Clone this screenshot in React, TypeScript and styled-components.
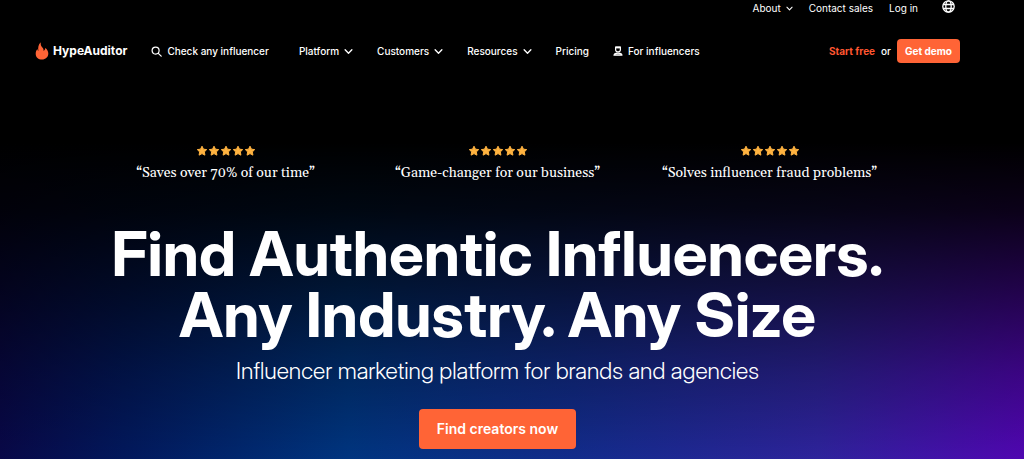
import React from 'react';
import styled, { createGlobalStyle } from 'styled-components';

const GlobalStyle = createGlobalStyle`
  * { box-sizing: border-box; }
  body {
    margin: 0;
    background: #000;
    color: #fff;
    font-family: Inter, "Liberation Sans", sans-serif;
  }
  a { color: inherit; text-decoration: none; }
`;

const Page = styled.div`
  min-height: 100vh;
  padding: 0 64px 11px 35px;
  background:
    linear-gradient(
      to bottom,
      #000 0%,
      #000 31%,
      rgba(0, 0, 0, 0.86) 46%,
      rgba(0, 0, 0, 0.6) 62%,
      rgba(0, 0, 0, 0.27) 81%,
      rgba(0, 0, 0, 0) 100%
    ),
    linear-gradient(
      to right,
      #080848 0%,
      #02185c 12%,
      #003580 34%,
      #122c8c 56%,
      #2e239c 80%,
      #5006b2 100%
    );
`;

const TopBar = styled.nav`
  display: flex;
  justify-content: flex-end;
  align-items: center;
  gap: 16px;
  height: 16px;
  padding-right: 5px;
`;

const menuText = `
  display: flex;
  align-items: center;
  gap: 5px;
  padding: 0;
  border: 0;
  background: none;
  color: #fff;
  font-family: inherit;
  font-size: 10px;
  line-height: 16px;
  white-space: nowrap;
`;

const MenuButton = styled.button<{ $light?: boolean }>`
  ${menuText}
  font-weight: ${({ $light }) => ($light ? 400 : 500)};
`;

const MenuLink = styled.a<{ $light?: boolean }>`
  ${menuText}
  font-weight: ${({ $light }) => ($light ? 400 : 500)};
`;

const GlobeButton = styled.button`
  display: flex;
  margin: 0 0 4px 8px;
  padding: 0;
  border: 0;
  background: none;
  color: #fff;
`;

const MainBar = styled.header`
  display: flex;
  align-items: center;
  height: 24px;
  margin-top: 23px;
`;

const Logo = styled.a`
  display: flex;
  align-items: center;
  gap: 4px;
  font-size: 12px;
  line-height: 16px;
  font-weight: 700;
`;

const SearchArea = styled.div`
  margin: 0 30px 0 24px;
`;

const MainMenu = styled.nav`
  display: flex;
  align-items: center;
  gap: 24px;
`;

const Actions = styled.div`
  display: flex;
  align-items: center;
  gap: 6px;
  margin-left: auto;
  font-size: 10px;
  line-height: 16px;
  font-weight: 500;
  white-space: nowrap;
`;

const StartLink = styled.a`
  && { color: #ff5630; }
  font-weight: 700;
`;

const DemoButton = styled.button`
  height: 24px;
  padding: 0 8px;
  border: 0;
  border-radius: 4px;
  background: #ff6436;
  color: #fff;
  font: 700 10px/16px Inter, "Liberation Sans", sans-serif;
`;

const Hero = styled.main`
  display: flex;
  flex-direction: column;
  align-items: center;
  padding-top: 82px;
  text-align: center;
`;

const Reviews = styled.div`
  display: grid;
  grid-template-columns: repeat(3, 1fr);
  width: 100%;
  max-width: 816px;
`;

const Review = styled.figure`
  display: flex;
  flex-direction: column;
  align-items: center;
  gap: 6px;
  margin: 0;
`;

const Stars = styled.div`
  display: flex;
`;

const Quote = styled.blockquote`
  margin: 0;
  font-family: Gelasio, Georgia, "Liberation Serif", serif;
  font-size: 14px;
  line-height: 20px;
`;

const Title = styled.h1`
  margin: 40px 0 0;
  font-family: "Inter Display", Inter, "Liberation Sans", sans-serif;
  font-size: 62px;
  line-height: 61px;
  font-weight: 700;
`;

const Subtitle = styled.p`
  margin: 12px 0 0;
  font-family: "Inter Display", Inter, "Liberation Sans", sans-serif;
  font-size: 23px;
  line-height: 28px;
  font-weight: 300;
`;

const CtaButton = styled.button`
  height: 40px;
  margin-top: 24px;
  padding: 0 18px;
  border: 0;
  border-radius: 4px;
  background: #ff6436;
  color: #fff;
  font: 600 14px/20px Inter, "Liberation Sans", sans-serif;
`;

const Chevron = ({ size = 9 }: { size?: number }) => (
  <svg width={size} height={size} viewBox="0 0 8 8" fill="none" aria-hidden="true">
    <path d="M1 2.500 4 5.600 7 2.500" stroke="currentColor" strokeWidth="1.200" strokeLinecap="round" strokeLinejoin="round" />
  </svg>
);

const Flame = () => (
  <svg width="14" height="18" viewBox="0 0 14 18" aria-hidden="true">
    <path
      fill="#ff6436"
      d="M5.900.3C5.300 2.600 6 4.200 7.600 5.800c.9.900 1.200 1.900.8 3 1-.3 1.700-1.200 1.800-2.900 2 1.300 3.100 3.200 3.100 5.700 0 3.600-2.700 6-6.300 6S.7 15.200.7 11.700c0-1.900.7-3.400 1.700-4.700.1 1 .4 1.700 1 2.100C2.900 5.700 3.200 2.400 5.900.3Z"
    />
  </svg>
);

const Search = () => (
  <svg width="11" height="11" viewBox="0 0 11 11" fill="none" stroke="currentColor" strokeWidth="1.200" strokeLinecap="round" aria-hidden="true">
    <circle cx="4.600" cy="4.600" r="3.500" />
    <path d="m7.300 7.300 2.900 2.900" />
  </svg>
);

const Person = () => (
  <svg width="10" height="10" viewBox="0 0 10 10" fill="none" stroke="currentColor" strokeWidth="1.200" strokeLinejoin="round" aria-hidden="true">
    <path d="M2.600 1h4.800v2.400C7.400 4.900 6.400 5.900 5 5.900S2.600 4.900 2.600 3.400Z" />
    <path d="M2.400 1.500h5.200" strokeWidth="1.800" />
    <path d="M1 9.200C1.300 7.800 2.600 7.200 5 7.200s3.700.6 4 2Z" fill="currentColor" fillOpacity=".5" />
  </svg>
);

const Globe = () => (
  <svg width="13" height="13" viewBox="0 0 13 13" fill="none" stroke="currentColor" strokeWidth="1.300" aria-hidden="true">
    <circle cx="6.500" cy="6.500" r="5.700" />
    <ellipse cx="6.500" cy="6.500" rx="2.700" ry="5.700" />
    <path d="M1.200 4.500h10.600M1.200 8.500h10.600" />
  </svg>
);

const Star = () => (
  <svg width="12" height="12" viewBox="0 0 12 12" aria-hidden="true">
    <path
      d="m6 1.200 1.450 2.950 3.250.47-2.350 2.290.56 3.240L6 8.620l-2.910 1.530.56-3.240L1.300 4.620l3.250-.47Z"
      fill="#ffb340"
      stroke="#ffb340"
      strokeWidth="1"
      strokeLinejoin="round"
    />
  </svg>
);

const reviews = [
  '“Saves over 70% of our time”',
  '“Game-changer for our business”',
  '“Solves influencer fraud problems”',
];

export default function App() {
  return (
    <>
      <GlobalStyle />
      <Page>
        <TopBar aria-label="Account">
          <MenuButton $light type="button">
            About <Chevron size={7} />
          </MenuButton>
          <MenuLink $light href="#contact">Contact sales</MenuLink>
          <MenuLink $light href="#login">Log in</MenuLink>
          <GlobeButton type="button" aria-label="Language">
            <Globe />
          </GlobeButton>
        </TopBar>
        <MainBar>
          <Logo href="#home">
            <Flame />
            HypeAuditor
          </Logo>
          <SearchArea>
            <MenuLink href="#check">
              <Search />
              Check any influencer
            </MenuLink>
          </SearchArea>
          <MainMenu aria-label="Main">
            <MenuButton type="button">
              Platform <Chevron />
            </MenuButton>
            <MenuButton type="button">
              Customers <Chevron />
            </MenuButton>
            <MenuButton type="button">
              Resources <Chevron />
            </MenuButton>
            <MenuLink href="#pricing">Pricing</MenuLink>
            <MenuLink href="#influencers">
              <Person />
              For influencers
            </MenuLink>
          </MainMenu>
          <Actions>
            <StartLink href="#start">Start free</StartLink>
            <span>or</span>
            <DemoButton type="button">Get demo</DemoButton>
          </Actions>
        </MainBar>
        <Hero>
          <Reviews>
            {reviews.map((text) => (
              <Review key={text}>
                <Stars role="img" aria-label="5 out of 5 stars">
                  {[0, 1, 2, 3, 4].map((n) => (
                    <Star key={n} />
                  ))}
                </Stars>
                <Quote>{text}</Quote>
              </Review>
            ))}
          </Reviews>
          <Title>
            Find Authentic Influencers.
            <br />
            Any Industry. Any Size
          </Title>
          <Subtitle>Influencer marketing platform for brands and agencies</Subtitle>
          <CtaButton type="button">Find creators now</CtaButton>
        </Hero>
      </Page>
    </>
  );
}
